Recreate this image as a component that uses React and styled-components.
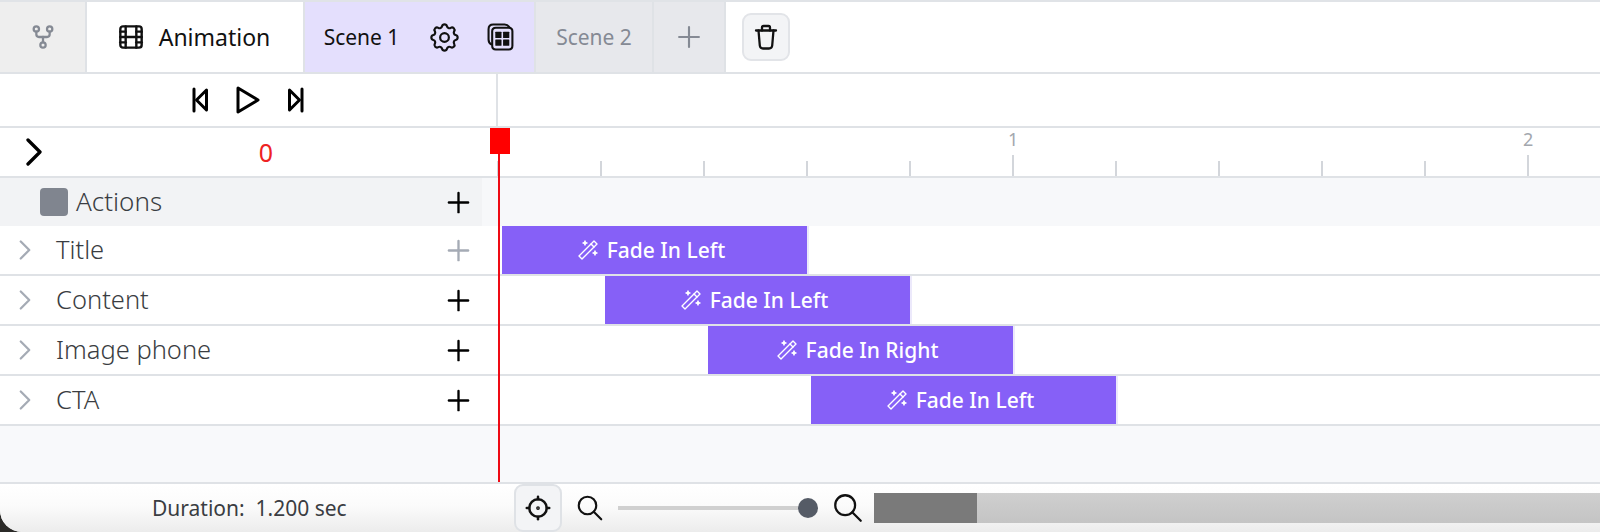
import React from "react";
import styled, { createGlobalStyle } from "styled-components";
import {
  TbGitFork, TbMovie, TbSettings, TbPlus, TbChevronRight, TbWand, TbFocus2, TbSearch,
} from "react-icons/tb";

const Global = createGlobalStyle`
  html, body { margin: 0; padding: 0; background: #2b2a28; }
  body { font-family: "Noto Sans", "Open Sans", sans-serif; }
`;

const Frame = styled.div`
  width: 1600px; height: 532px; display: flex; flex-direction: column; box-sizing: border-box;
  background: #fff; overflow: hidden; position: relative;
  border-bottom-left-radius: 22px;
  border-top: 2px solid #e0e3e7;
`;
const TabBar = styled.div`
  height: 70px; display: flex; flex: none; border-bottom: 2px solid #dfe2e6; box-sizing: content-box;
`;
const Tab = styled.div`
  width: ${p => p.$w}px; flex: none; display: flex; align-items: center; justify-content: center;
  gap: ${p => p.$gap || 0}px; background: ${p => p.$bg}; color: ${p => p.$fg || "#111"};
  padding-right: ${p => p.$pr || 0}px;
  border-right: 2px solid #dfe2e6; font-size: ${p => p.$fs || 16}px; box-sizing: border-box;
`;
const SceneName = styled.span`
  margin-right: 3px;
`;
const Trash = styled.button`
  width: 48px; height: 48px; margin: 11px 0 0 16px; padding: 0; display: flex; align-items: center; justify-content: center;
  background: #f3f4f6; border: 2px solid #e2e4e8; border-radius: 9px; box-sizing: border-box;
`;
const Controls = styled.div`
  height: 52px; flex: none; display: flex; border-bottom: 2px solid #dfe2e6;
`;
const ControlsLeft = styled.div`
  width: 498px; flex: none; display: flex; align-items: center; padding-left: 192px; gap: 28px;
  border-right: 2px solid #dfe2e6; box-sizing: border-box;
`;
const RulerRow = styled.div`
  height: 48px; flex: none; display: flex; border-bottom: 2px solid #dfe2e6;
`;
const RulerLeft = styled.div`
  width: 497px; flex: none; display: flex; align-items: center; padding-left: 26px; box-sizing: border-box;
`;
const Zero = styled.span`
  width: 452px; flex: none; margin-left: -2px; text-align: center; color: #ee2222; font-size: 25px; line-height: 1;
`;
const Ruler = styled.div`
  flex: 1; display: flex; align-items: flex-end;
`;
const Tick = styled.div`
  width: 103px; flex: none; position: relative; height: ${p => p.$major ? 21 : 15}px;
  border-left: 2px solid #d3d6db; box-sizing: border-box;
`;
const TickLabel = styled.span`
  position: absolute; left: -6px; top: -28px; width: 10px; text-align: center; font-size: 18px; color: #a3a7ae; line-height: 24px;
`;
const ActionsRow = styled.div`
  height: 48px; flex: none; display: flex; background: #f7f8fa;
`;
const ActionsLeft = styled.div`
  width: 482px; flex: none; display: flex; align-items: center; background: #f2f3f5;
  padding: 0 7px 0 40px; box-sizing: border-box; color: #3a3d42; font-size: 26px; font-weight: 300;
`;
const Swatch = styled.span`
  width: 28px; height: 28px; border-radius: 4px; background: #80858f; flex: none; margin-right: 8px;
`;
const ActionsText = styled.span`
  margin-top: -2px;
`;
const Track = styled.div`
  height: 48px; flex: none; display: flex; border-bottom: 2px solid #dfe2e6; box-sizing: content-box;
`;
const TrackLeft = styled.div`
  width: 482px; flex: none; display: flex; align-items: center; padding: 0 7px 0 8px; box-sizing: border-box;
  color: #3a3d42; font-size: 25.5px; font-weight: 300; background: #fff;
`;
const Name = styled.span`
  margin: -2px 0 0 14px; flex: 1;
`;
const Add = styled.span`
  display: flex; color: ${p => p.$muted ? "#a5abb5" : "#000"}; margin-left: auto;
`;
const TrackRight = styled.div`
  flex: 1; padding-left: ${p => p.$offset}px;
`;
const Bar = styled.div`
  width: 307px; height: 48px; display: flex; align-items: center; justify-content: center; gap: 7px;
  background: #8660f7; color: #fff; font-size: 21px; font-weight: 500; padding-right: 8px;
  border-right: 2px solid #ece9fb; box-sizing: border-box;
`;
const Empty = styled.div`
  flex: 1; background: #f8f9fb; border-bottom: 2px solid #dfe2e6;
`;
const Footer = styled.div`
  height: 48px; flex: none; display: flex; align-items: center;
  background: linear-gradient(180deg, #ffffff 0%, #fbfbfb 45%, #ececec 100%);
`;
const Duration = styled.div`
  width: 514px; flex: none; padding-left: 152px; box-sizing: border-box; color: #3a3d42; font-size: 21px; white-space: pre;
`;
const Focus = styled.button`
  width: 48px; height: 48px; padding: 0; flex: none; display: flex; align-items: center; justify-content: center; color: #111;
  background: #f3f4f6; border: 2px solid #dfe2e6; border-radius: 9px; box-sizing: border-box;
`;
const ZoomIcon = styled.span`
  display: flex; flex: none; margin-left: ${p => p.$ml}px; color: #111;
`;
const Slider = styled.div`
  width: 190px; flex: none; margin-left: ${p => p.$ml}px; height: 4px; background: #d0d0d0; position: relative;
`;
const Thumb = styled.span`
  position: absolute; right: -10px; top: -8px; width: 20px; height: 20px; border-radius: 50%; background: #555b66;
`;
const Scroll = styled.div`
  flex: 1; height: 30px; margin-left: 9px; background: linear-gradient(180deg, #cfcfcf, #c4c4c4); display: flex;
`;
const ScrollThumb = styled.div`
  width: 103px; background: #7a7a7a;
`;
const Playhead = styled.div`
  position: absolute; left: 490px; top: 126px; width: 20px; height: 26px; background: #f00;
  &::after { content: ""; position: absolute; left: 8px; top: 26px; width: 2px; height: 328px; background: #ee0a14; }
`;

const LayersIcon = () => (
  <svg width="28" height="28" viewBox="1 1 27 27" fill="none" stroke="#111" strokeWidth="2" strokeLinecap="round" strokeLinejoin="round">
    <path d="M5 21.500 C3 20.500 2.500 19.500 2.500 17 V7 C2.500 4 4 2.500 7 2.500 H18 C20.500 2.500 21.500 3.500 22.500 5" />
    <path d="M6 22 V9 C6 6.500 7 5.500 9.500 5.500 H22 C24.500 5.500 25.500 6.500 25.500 9 V23 C25.500 25.500 24.500 26.500 22 26.500 H9.500 C7 26.500 6 25.500 6 23 Z" />
    <g fill="#111" stroke="none">
      <rect x="9" y="9.500" width="6" height="6" rx="0.500" /><rect x="16.500" y="9.500" width="6" height="6" rx="0.500" />
      <rect x="9" y="17" width="6" height="6" rx="0.500" /><rect x="16.500" y="17" width="6" height="6" rx="0.500" />
    </g>
  </svg>
);
const TrashIcon = () => (
  <svg width="24" height="26" viewBox="0 0 24 26" fill="none" stroke="#111" strokeWidth="2.300" strokeLinecap="round" strokeLinejoin="round">
    <path d="M2 6.500 H22" /><path d="M8 6.500 V3.500 C8 2.500 8.500 2 9.500 2 H14.500 C15.500 2 16 2.500 16 3.500 V6.500" />
    <path d="M4.500 6.500 L5.800 21.500 C6 23.500 7 24.500 9 24.500 H15 C17 24.500 18 23.500 18.200 21.500 L19.500 6.500" />
  </svg>
);
const SkipBackIcon = () => (
  <svg width="16" height="26" viewBox="0 0 16 26" fill="none" stroke="#000" strokeWidth="3" strokeLinecap="round" strokeLinejoin="round">
    <path d="M2 2 V24" /><path d="M14.500 3 L4.500 13 L14.500 23 Z" />
  </svg>
);
const SkipForwardIcon = () => (
  <svg width="16" height="26" viewBox="0 0 16 26" fill="none" stroke="#000" strokeWidth="3" strokeLinecap="round" strokeLinejoin="round">
    <path d="M14 2 V24" /><path d="M1.500 3 L11.500 13 L1.500 23 Z" />
  </svg>
);
const PlayIcon = () => (
  <svg width="24" height="28" viewBox="0 0 24 28" fill="none" stroke="#000" strokeWidth="3" strokeLinecap="round" strokeLinejoin="round">
    <path d="M2 2 L22 14 L2 26 Z" />
  </svg>
);
const CollapseIcon = () => (
  <svg width="16" height="28" viewBox="0 0 16 28" fill="none" stroke="#000" strokeWidth="3.300" strokeLinecap="round" strokeLinejoin="round">
    <path d="M2 2 L14 14 L2 26" />
  </svg>
);

const tracks = [
  { name: "Title", label: "Fade In Left", offset: 5, muted: true },
  { name: "Content", label: "Fade In Left", offset: 108 },
  { name: "Image phone", label: "Fade In Right", offset: 211 },
  { name: "CTA", label: "Fade In Left", offset: 314 },
];
const ticks = Array.from({ length: 11 }, (_, i) => i);

export default function App() {
  return (
    <>
      <Global />
      <Frame>
        <TabBar>
          <Tab $w={87} $bg="#eeeeee" $fg="#858a94"><TbGitFork size={32} strokeWidth={1.7} /></Tab>
          <Tab $w={218} $bg="#fff" $gap={12} $fs={23} $pr={5}><TbMovie size={32} strokeWidth={1.8} />Animation</Tab>
          <Tab $w={231} $bg="#e4dffd" $gap={25} $fs={21}><SceneName>Scene 1</SceneName><TbSettings size={35} strokeWidth={1.5} /><LayersIcon /></Tab>
          <Tab $w={118} $bg="#e7e8ec" $fg="#858a94" $fs={21}>Scene 2</Tab>
          <Tab $w={72} $bg="#e7e8ec" $fg="#858a94"><TbPlus size={34} strokeWidth={1.5} /></Tab>
          <Trash aria-label="Delete"><TrashIcon /></Trash>
        </TabBar>
        <Controls>
          <ControlsLeft>
            <SkipBackIcon />
            <PlayIcon />
            <SkipForwardIcon />
          </ControlsLeft>
        </Controls>
        <RulerRow>
          <RulerLeft>
            <CollapseIcon />
            <Zero>0</Zero>
          </RulerLeft>
          <Ruler>
            {ticks.map(i => (
              <Tick key={i} $major={i % 5 === 0 && i > 0}>
                {i % 5 === 0 && i > 0 && <TickLabel>{i / 5}</TickLabel>}
              </Tick>
            ))}
          </Ruler>
        </RulerRow>
        <ActionsRow>
          <ActionsLeft>
            <Swatch /><ActionsText>Actions</ActionsText>
            <Add><TbPlus size={33} strokeWidth={1.7} /></Add>
          </ActionsLeft>
        </ActionsRow>
        {tracks.map(t => (
          <Track key={t.name}>
            <TrackLeft>
              <TbChevronRight size={34} strokeWidth={1.6} color="#a5abb5" />
              <Name>{t.name}</Name>
              <Add $muted={t.muted}><TbPlus size={33} strokeWidth={1.7} /></Add>
            </TrackLeft>
            <TrackRight $offset={t.offset + 15}>
              <Bar><TbWand size={24} strokeWidth={1.4} />{t.label}</Bar>
            </TrackRight>
          </Track>
        ))}
        <Empty />
        <Footer>
          <Duration>Duration:  1.200 sec</Duration>
          <Focus aria-label="Center"><TbFocus2 size={30} /></Focus>
          <ZoomIcon $ml={13}><TbSearch size={30} strokeWidth={1.7} /></ZoomIcon>
          <Slider $ml={13}><Thumb /></Slider>
          <ZoomIcon $ml={23}><TbSearch size={34} strokeWidth={1.6} /></ZoomIcon>
          <Scroll><ScrollThumb /></Scroll>
        </Footer>
        <Playhead />
      </Frame>
    </>
  );
}
